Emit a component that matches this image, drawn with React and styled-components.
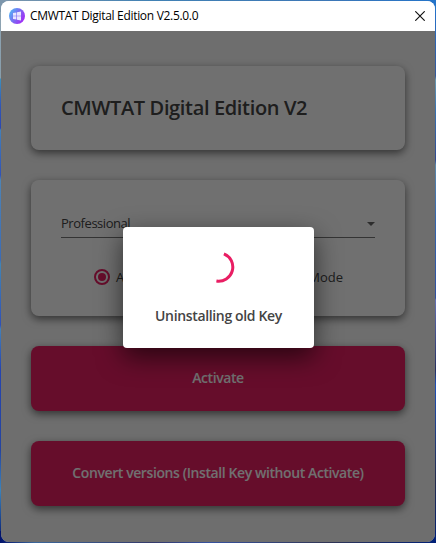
import React from "react";
import styled, { createGlobalStyle } from "styled-components";

const PINK = "#e91e63";

const GlobalStyle = createGlobalStyle`
  * { box-sizing: border-box; }
  body { margin: 0; overflow: hidden; font-family: "Open Sans", "Noto Sans", sans-serif; }
`;

const Desktop = styled.div`
  height: 543px;
  padding: 1px;
  background:
    linear-gradient(90deg, #7d97ac 0, #4181b4 35%, #3d77b6 75%, #2474c9 100%) top / 100% 12px no-repeat,
    linear-gradient(90deg, #00126c, #3b679b 8%, #34396a 35%, #3652a0 48%, #303554 75%, #002078) bottom / 100% 12px no-repeat,
    linear-gradient(180deg, #8fa5b5 0, #889eab 78px, #3c8fbd 79px, #3157b6 105px, #2b47b2 128px, #4280ba 130px, #3052b8 175px, #4d84b6 180px, #3b6bb5 260px, #4185b5 264px, #2f50b7 325px, #4380b9 329px, #2444b1 370px, #2444a0 450px, #3b83bb 490px, #00126c 543px) left / 8px 100% no-repeat,
    linear-gradient(180deg, #2474d0 0, #34599b 76px, #6997b0 80px, #3873b2 110px, #304a91 160px, #5c88ab 165px, #3466ae 220px, #3050a0 298px, #6270b4 300px, #252f61 370px, #1d50b9 385px, #222b4b 480px, #002078 543px) right / 8px 100% no-repeat;
`;

const Window = styled.main`
  height: 541px;
  display: flex;
  flex-direction: column;
  border-radius: 8px;
  overflow: hidden;
  background: #fafafa;
`;

const TitleBar = styled.header`
  height: 30px;
  flex: none;
  display: flex;
  align-items: center;
  padding: 0 10px 0 8px;
  background: #fff;
  svg { flex: none; display: block; }
`;

const Caption = styled.span`
  flex: 1;
  margin-left: 5px;
  font: 12px/16px "Open Sans", sans-serif;
  letter-spacing: ${(p) => p.$track}px;
  white-space: nowrap;
  color: #000;
`;

const Content = styled.div`
  flex: 1;
  position: relative;
  display: flex;
  flex-direction: column;
  padding: 35px 30px 0;
`;

const Card = styled.section`
  flex: none;
  height: ${(p) => p.$height}px;
  margin-bottom: ${(p) => p.$gap}px;
  padding: 0 30px;
  border-radius: 8px;
  background: #fff;
  box-shadow: 0 3px 9px 0 rgba(0, 0, 0, 0.55);
`;

const Heading = styled.h1`
  margin: 0;
  font-size: 20px;
  line-height: 84px;
  font-weight: 600;
  letter-spacing: ${(p) => p.$track}px;
  white-space: nowrap;
  color: #444;
`;

const Select = styled.div`
  display: flex;
  align-items: center;
  justify-content: space-between;
  height: 28px;
  margin-top: 30px;
  border-bottom: 1px solid #777;
  font-size: 13px;
  letter-spacing: ${(p) => p.$track}px;
  color: #444;
`;

const Value = styled.span`
  margin-top: -2px;
`;

const Arrow = styled.svg`
  display: block;
`;

const Modes = styled.div`
  display: flex;
  justify-content: space-between;
  margin: 29px 32px 0 33px;
`;

const Mode = styled.label`
  display: flex;
  align-items: center;
  gap: 6px;
  height: 20px;
  font-size: 13px;
  white-space: nowrap;
  color: #444;
`;

const Radio = styled.span`
  display: grid;
  place-items: center;
  width: 16px;
  height: 16px;
  border: 2px solid ${(p) => (p.$on ? PINK : "#757575")};
  border-radius: 50%;
  &::after {
    content: "";
    width: 8px;
    height: 8px;
    border-radius: 50%;
    background: ${(p) => (p.$on ? PINK : "transparent")};
  }
`;

const Action = styled.button`
  flex: none;
  height: 65px;
  margin: 0 0 30px;
  padding: 0 0 1px;
  border: 0;
  border-radius: 8px;
  background: ${PINK};
  box-shadow: 0 3px 9px 0 rgba(0, 0, 0, 0.55);
  font: 600 14px/20px "Open Sans", sans-serif;
  letter-spacing: ${(p) => p.$track}px;
  white-space: nowrap;
  color: #fff;
`;

const Overlay = styled.div`
  position: absolute;
  inset: 0;
  display: flex;
  justify-content: center;
  align-items: flex-start;
  padding: 196px 0 0 1px;
  background: rgba(0, 0, 0, 0.56);
`;

const Dialog = styled.div`
  display: flex;
  flex-direction: column;
  align-items: center;
  width: 191px;
  height: 121px;
  padding-top: 24px;
  border-radius: 4px;
  background: #fff;
  box-shadow: 0 9px 26px 0 rgba(0, 0, 0, 0.6);
`;

const Message = styled.p`
  margin: 23px 0 0;
  font-size: 14px;
  line-height: 20px;
  font-weight: 600;
  letter-spacing: ${(p) => p.$track}px;
  white-space: nowrap;
  color: #444;
`;

const AppLogo = () => (
  <svg width="16" height="16" viewBox="0 0 16 16">
    <defs>
      <linearGradient id="logo" x1="0" y1="0.2" x2="1" y2="0.8">
        <stop offset="0" stopColor="#51b8f5" />
        <stop offset="0.5" stopColor="#7d66f2" />
        <stop offset="1" stopColor="#a921f7" />
      </linearGradient>
    </defs>
    <circle cx="8" cy="8" r="8" fill="url(#logo)" />
    <path d="M4 5l3.4-.6v3.3H4zM8 4.3l4-.7v4.1H8zM4 8.3h3.4v3.3L4 11zM8 8.3h4v4.1l-4-.7z" fill="#e9e5ff" />
  </svg>
);

const CloseIcon = () => (
  <svg width="10" height="10" viewBox="0 0 10 10">
    <path d="M.3.3l9.4 9.4M9.7.3L.3 9.7" stroke="#111" strokeWidth="1.15" />
  </svg>
);

const Spinner = () => (
  <svg width="32" height="32" viewBox="0 0 32 32">
    <path d="M20.9 2.8A14.2 14.2 0 0 1 13.4 30" stroke={PINK} strokeWidth="3" fill="none" />
  </svg>
);

export default function App() {
  return (
    <>
      <GlobalStyle />
      <Desktop>
        <Window>
          <TitleBar>
            <AppLogo />
            <Caption $track={-0.31}>CMWTAT Digital Edition V2.5.0.0</Caption>
            <CloseIcon />
          </TitleBar>
          <Content>
            <Card $height={84} $gap={30}>
              <Heading $track={-0.35}>CMWTAT Digital Edition V2</Heading>
            </Card>
            <Card $height={135.5} $gap={30.5}>
              <Select $track={-0.45}>
                <Value>Professional</Value>
                <Arrow width="8" height="4" viewBox="0 0 8 4">
                  <path d="M0 0h8L4 4z" fill="#666" />
                </Arrow>
              </Select>
              <Modes>
                <Mode><Radio $on />Auto Mode</Mode>
                <Mode><Radio />Manual Mode</Mode>
              </Modes>
            </Card>
            <Action $track={-0.42}>Activate</Action>
            <Action $track={-0.41}>Convert versions (Install Key without Activate)</Action>
            <Overlay>
              <Dialog>
                <Spinner />
                <Message $track={-0.35}>Uninstalling old Key</Message>
              </Dialog>
            </Overlay>
          </Content>
        </Window>
      </Desktop>
    </>
  );
}
